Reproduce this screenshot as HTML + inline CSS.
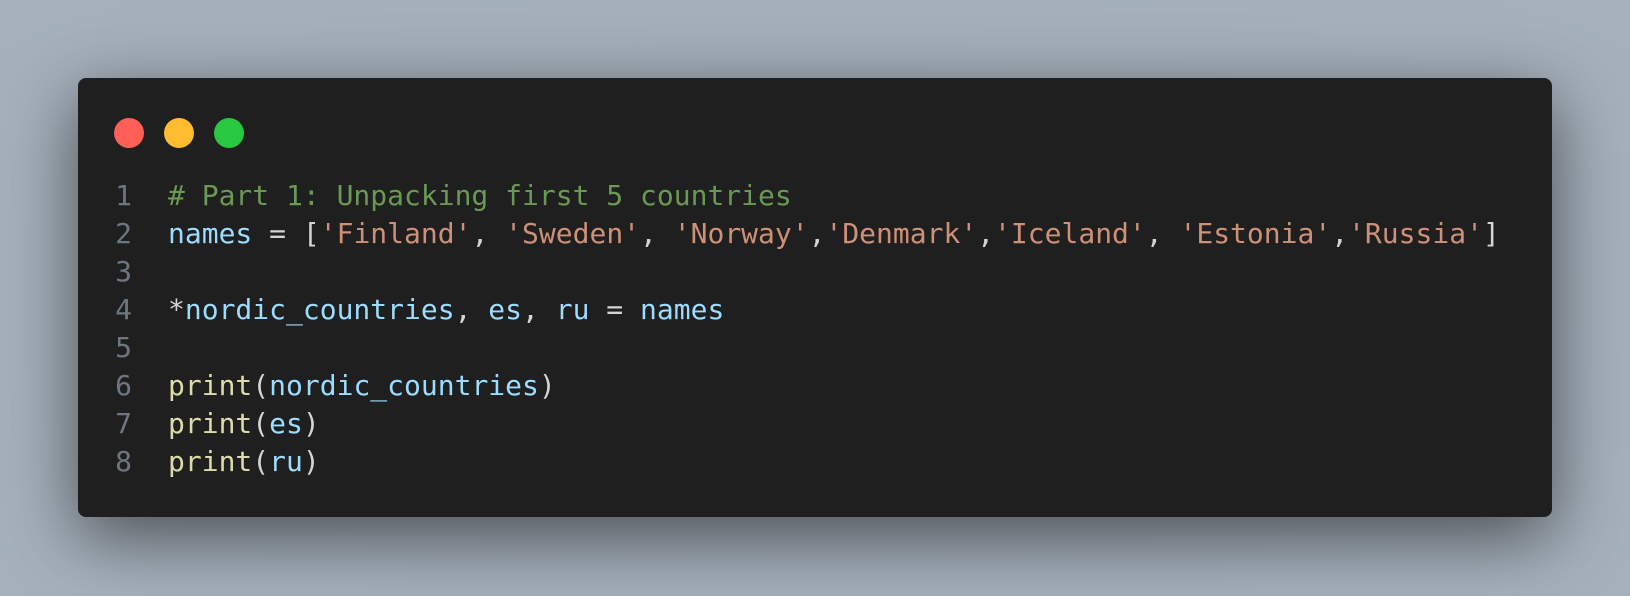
<!DOCTYPE html>
<html><head><meta charset="utf-8"><style>
html,body{margin:0;padding:0;}
body{width:1630px;height:596px;overflow:hidden;background:radial-gradient(ellipse at 50% 50%,#a0abb6 0%,#a6b1bc 100%);position:relative;}
.win{position:absolute;left:78px;top:78px;width:1474px;height:439px;background:#1f1f1f;border-radius:8px;box-shadow:0 20px 70px rgba(0,0,0,0.55);}
.dot{position:absolute;top:40px;width:30px;height:30px;border-radius:50%;}
pre{position:absolute;left:0;top:99px;margin:0;font-family:"DejaVu Sans Mono","Liberation Mono",monospace;font-size:28px;line-height:38px;color:#d4d4d4;}
.ln{display:inline-block;width:54px;text-align:right;color:#6e7681;margin-right:36px;}
.c{color:#6a9955}.v{color:#9cdcfe}.s{color:#ce9178}.f{color:#dcdcaa}
</style></head><body>
<div class="win">
<div class="dot" style="left:36px;background:#ff5f57"></div>
<div class="dot" style="left:86px;background:#febc2e"></div>
<div class="dot" style="left:136px;background:#28c840"></div>
<pre><span class="ln">1</span><span class="c"># Part 1: Unpacking first 5 countries</span>
<span class="ln">2</span><span class="v">names</span> = [<span class="s">'Finland'</span>, <span class="s">'Sweden'</span>, <span class="s">'Norway'</span>,<span class="s">'Denmark'</span>,<span class="s">'Iceland'</span>, <span class="s">'Estonia'</span>,<span class="s">'Russia'</span>]
<span class="ln">3</span>
<span class="ln">4</span>*<span class="v">nordic_countries</span>, <span class="v">es</span>, <span class="v">ru</span> = <span class="v">names</span>
<span class="ln">5</span>
<span class="ln">6</span><span class="f">print</span>(<span class="v">nordic_countries</span>)
<span class="ln">7</span><span class="f">print</span>(<span class="v">es</span>)
<span class="ln">8</span><span class="f">print</span>(<span class="v">ru</span>)</pre>
</div>
</body></html>
